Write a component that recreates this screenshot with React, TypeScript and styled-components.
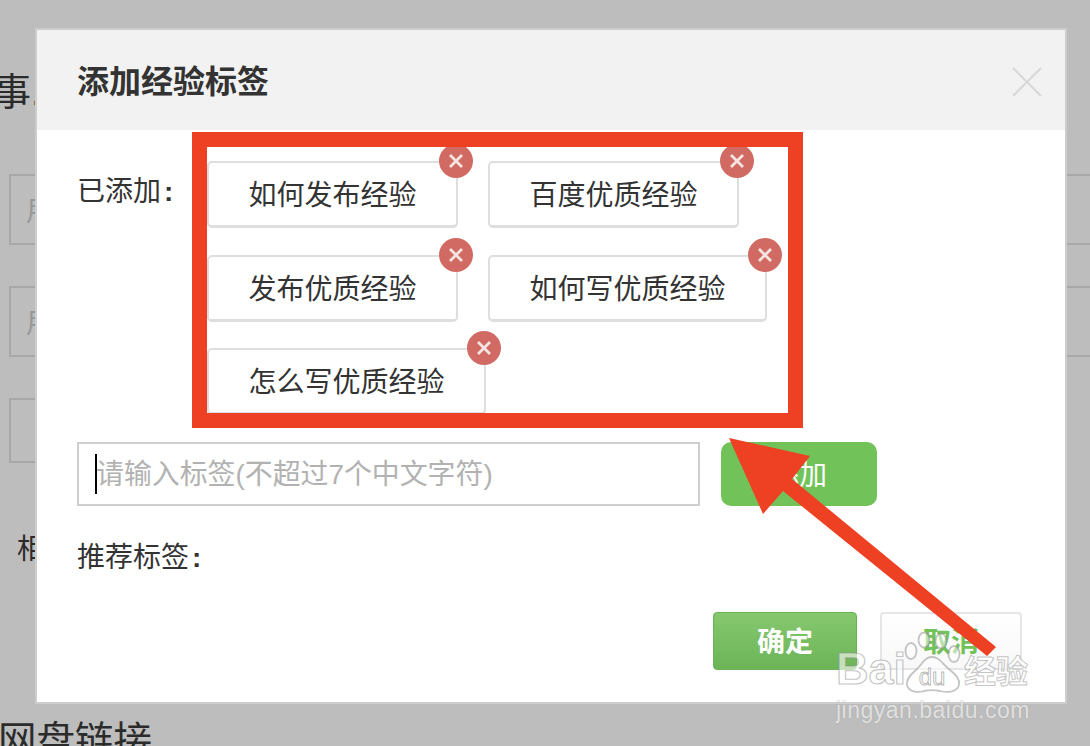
import styled, { createGlobalStyle } from "styled-components";

const GlobalStyle = createGlobalStyle`
	html, body {
		margin: 0;
		padding: 0;
		background: #bdbdbd;
	}
	* {
		box-sizing: border-box;
	}
`;

const FontStack = `"Liberation Sans", "Noto Sans CJK SC", sans-serif`;
const Green = "#72c25a";
const Red = "#ee4023";

const tags = [
	"如何发布经验",
	"百度优质经验",
	"发布优质经验",
	"如何写优质经验",
	"怎么写优质经验",
];

function App() {
	const TagsArray = tags.map((ele) => {
		return (
			<Tag key={ele}>
				{ele}
				<TagRemove>
					<svg width="16" height="16" viewBox="0 0 16 16">
						<path
							d="M2 2 L14 14 M14 2 L2 14"
							stroke="#f6e4e2"
							strokeWidth="2.8"
							fill="none"
						/>
					</svg>
				</TagRemove>
			</Tag>
		);
	});

	return (
		<Page>
			<GlobalStyle />
			<PageTitle>事.</PageTitle>
			<Field>用户</Field>
			<Field>用户</Field>
			<ShortField />
			<PageLabel>相关</PageLabel>
			<PageSubtitle>网盘链接</PageSubtitle>

			<Modal>
				<ModalHeader>
					<ModalTitle>添加经验标签</ModalTitle>
					<svg width="30" height="30" viewBox="0 0 30 30">
						<path
							d="M1 1 L29 29 M29 1 L1 29"
							stroke="#d8d8d8"
							strokeWidth="2.2"
							fill="none"
						/>
					</svg>
				</ModalHeader>
				<ModalBody>
					<AddedRow>
						<AddedLabel>
							已添加<Colon>:</Colon>
						</AddedLabel>
						<TagList>{TagsArray}</TagList>
					</AddedRow>
					<InputRow>
						<InputWrap>
							<TagInput placeholder="请输入标签(不超过7个中文字符)" readOnly />
							<Caret />
						</InputWrap>
						<AddButton>添加</AddButton>
					</InputRow>
					<RecommendLabel>
						推荐标签<Colon>:</Colon>
					</RecommendLabel>
					<Actions>
						<ConfirmButton>确定</ConfirmButton>
						<CancelButton>取消</CancelButton>
					</Actions>
				</ModalBody>
			</Modal>

			<RedFrame />
			<Arrow viewBox="0 0 1090 746" width="1090" height="746">
				<polygon
					points="729,438 810,456 792,479 996,647 987,656 783,491 763,514"
					fill={Red}
				/>
			</Arrow>

			<Watermark>
				<WatermarkTop>
					<WatermarkBai>Bai</WatermarkBai>
					<svg width="58" height="62" viewBox="0 0 58 62">
						<g
							fill="rgba(255,255,255,0.5)"
							stroke="rgba(140,140,140,0.5)"
							strokeWidth="1.8"
						>
							<ellipse cx="7" cy="19" rx="5.5" ry="8" />
							<ellipse cx="20" cy="8" rx="5.5" ry="7.5" />
							<ellipse cx="37" cy="9" rx="5.5" ry="7.5" />
							<ellipse cx="50" cy="22" rx="5.5" ry="8" />
							<path d="M28 25 C20 25 18 33 12 38 C5 44 2 48 3 53 C5 60 13 61 20 59 C25 58 31 58 36 59 C44 61 53 60 55 53 C56 47 52 43 46 38 C39 33 36 25 28 25 Z" />
						</g>
						<text
							x="28"
							y="53"
							textAnchor="middle"
							fontFamily="Liberation Sans, sans-serif"
							fontSize="24"
							fill="rgba(255,255,255,0.6)"
							stroke="rgba(140,140,140,0.65)"
							strokeWidth="0.9"
						>
							du
						</text>
					</svg>
					<WatermarkCn>经验</WatermarkCn>
				</WatermarkTop>
				<WatermarkUrl>jingyan.baidu.com</WatermarkUrl>
			</Watermark>
		</Page>
	);
}

const Page = styled.div`
	position: relative;
	width: 1090px;
	height: 746px;
	overflow: hidden;
	background: #bdbdbd;
	font-family: ${FontStack};
	color: #2b2b2b;
	padding-top: 72px;
`;
const PageTitle = styled.h2`
	margin: 0 0 62px -7px;
	font-size: 38px;
	line-height: 40px;
	font-weight: 400;
	white-space: nowrap;
`;
const Field = styled.div`
	width: 1200px;
	height: 71px;
	margin: 0 0 41px 9px;
	padding-left: 15px;
	border: 2px solid #a8a8a8;
	font-size: 28px;
	line-height: 71px;
	color: #989898;
`;
const ShortField = styled.div`
	width: 400px;
	height: 65px;
	margin-left: 9px;
	border: 2px solid #a8a8a8;
`;
const PageLabel = styled.div`
	margin: 67px 0 0 17px;
	font-size: 28px;
	line-height: 40px;
`;
const PageSubtitle = styled.h2`
	margin: 149px 0 0 -2px;
	font-size: 38.5px;
	line-height: 44px;
	font-weight: 400;
	white-space: nowrap;
`;

const Modal = styled.div`
	position: absolute;
	left: 35px;
	top: 28px;
	width: 1032px;
	height: 676px;
	background: #fff;
	border: 2px solid #cdcdcd;
`;
const ModalHeader = styled.div`
	height: 100px;
	background: #f2f2f2;
	display: flex;
	align-items: center;
	justify-content: space-between;
	padding: 3px 23px 0 40px;
`;
const ModalTitle = styled.h3`
	margin: 0;
	font-size: 32px;
	line-height: 40px;
	font-weight: 700;
	color: #333;
`;
const ModalBody = styled.div`
	padding: 0 43px 0 40px;
`;
const AddedRow = styled.div`
	display: flex;
	padding-top: 31px;
`;
const AddedLabel = styled.div`
	width: 130px;
	font-size: 28px;
	line-height: 62px;
	color: #333;
	flex-shrink: 0;
`;
const Colon = styled.span`
	margin-left: 3px;
	font-weight: 700;
`;
const TagList = styled.div`
	width: 582px;
	display: flex;
	flex-wrap: wrap;
	gap: 26.5px 30px;
	padding-bottom: 27px;
`;
const Tag = styled.div`
	position: relative;
	height: 67px;
	padding: 0 39.5px;
	border: 2px solid #dedede;
	border-bottom-width: 3px;
	border-radius: 5px;
	font-size: 28px;
	line-height: 66px;
	color: #333;
	white-space: nowrap;
`;
const TagRemove = styled.span`
	position: absolute;
	top: -19px;
	right: -17px;
	width: 34px;
	height: 34px;
	border-radius: 50%;
	background: #d16a63;
	display: flex;
	align-items: center;
	justify-content: center;
`;
const InputRow = styled.div`
	display: flex;
	gap: 21px;
`;
const InputWrap = styled.div`
	position: relative;
	width: 623px;
	height: 64px;
`;
const TagInput = styled.input`
	width: 100%;
	height: 100%;
	padding: 1px 0 0 17px;
	border: 2px solid #cfcfcf;
	outline: none;
	font-family: ${FontStack};
	font-size: 27.9px;
	color: #333;
	&::placeholder {
		color: #b2b2b2;
		opacity: 1;
	}
`;
const Caret = styled.span`
	position: absolute;
	left: 18px;
	top: 12px;
	width: 2px;
	height: 40px;
	background: #000;
`;
const AddButton = styled.div`
	width: 156px;
	height: 64px;
	border-radius: 10px;
	background: ${Green};
	color: #fff;
	font-size: 28px;
	line-height: 67px;
	text-align: center;
`;
const RecommendLabel = styled.div`
	margin-top: 32px;
	font-size: 28px;
	line-height: 40px;
	color: #333;
`;
const Actions = styled.div`
	display: flex;
	justify-content: flex-end;
	gap: 23px;
	margin-top: 34px;
`;
const ConfirmButton = styled.div`
	width: 144px;
	height: 58px;
	border: 1px solid #6bb255;
	border-radius: 4px;
	background: linear-gradient(#86c86f, #6cb457);
	color: #fff;
	font-size: 28px;
	font-weight: 700;
	line-height: 60px;
	text-align: center;
`;
const CancelButton = styled.div`
	width: 142px;
	height: 58px;
	border: 2px solid #e6e6e6;
	border-radius: 4px;
	background: linear-gradient(#fff, #f8f8f8);
	color: ${Green};
	font-size: 28px;
	font-weight: 700;
	line-height: 58px;
	text-align: center;
`;

const RedFrame = styled.div`
	position: absolute;
	left: 192px;
	top: 132px;
	width: 611px;
	height: 296px;
	border: 15px solid ${Red};
`;
const Arrow = styled.svg`
	position: absolute;
	left: 0;
	top: 0;
`;

const Watermark = styled.div`
	position: absolute;
	left: 836px;
	top: 632px;
	width: 200px;
`;
const WatermarkTop = styled.div`
	display: flex;
	align-items: flex-end;
	height: 62px;
`;
const WatermarkBai = styled.span`
	width: 68px;
	font-family: "Liberation Sans", sans-serif;
	font-size: 45px;
	font-weight: 700;
	line-height: 50px;
	color: rgba(255, 255, 255, 0.6);
	-webkit-text-stroke: 1.2px rgba(140, 140, 140, 0.5);
`;
const WatermarkCn = styled.span`
	margin-left: 2px;
	font-size: 32px;
	font-weight: 700;
	line-height: 44px;
	color: rgba(255, 255, 255, 0.75);
	-webkit-text-stroke: 1px rgba(140, 140, 140, 0.5);
`;
const WatermarkUrl = styled.div`
	margin-top: 3px;
	font-family: "Liberation Sans", sans-serif;
	font-size: 23px;
	line-height: 26px;
	letter-spacing: 0.5px;
	color: rgba(255, 255, 255, 0.7);
	text-shadow: 0 0 1px rgba(120, 120, 120, 0.5);
`;

export default App;
